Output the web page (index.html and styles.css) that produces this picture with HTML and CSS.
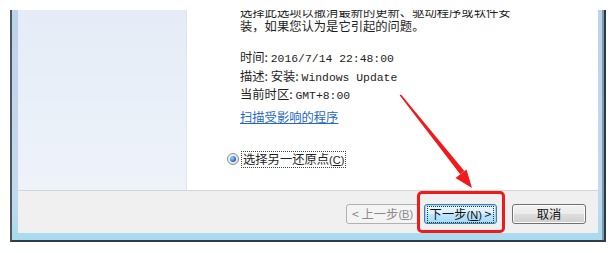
FILE: index.html
```html
<!DOCTYPE html>
<html lang="zh-CN">
<head>
<meta charset="utf-8">
<title>系统还原</title>
<link rel="stylesheet" href="styles.css">
</head>
<body>
<div class="window">
  <div class="client">
    <div class="main">
      <div class="sidebar"></div>
      <div class="content">
        <p class="desc">选择此选项以撤消最新的更新、驱动程序或软件安<br>装，如果您认为是它引起的问题。</p>
        <div class="info">
          <div class="row">时间: <span class="en">2016/7/14 22:48:00</span></div>
          <div class="row">描述: 安装: <span class="en">Windows Update</span></div>
          <div class="row">当前时区: <span class="en">GMT+8:00</span></div>
        </div>
        <a class="link" href="#">扫描受影响的程序</a>
        <div class="radio-row">
          <span class="radio"><span class="dot"></span></span>
          <span class="radio-label">选择另一还原点<span class="en-s">(<u>C</u>)</span></span>
        </div>
      </div>
    </div>
    <div class="footer">
      <button class="btn disabled">&lt; 上一步<span class="en-s">(<u>B</u>)</span></button>
      <button class="btn primary"><span class="focus">下一步<span class="en-s">(<u>N</u>)</span> &gt;</span></button>
      <button class="btn cancel">取消</button>
    </div>
  </div>
</div>
<div class="highlight"></div>
<svg class="arrow" width="614" height="253" viewBox="0 0 614 253">
  <polygon points="399.6,95.3 401,94.4 464.4,171 460.2,174.3" fill="#f2191b"/>
  <polygon points="472,188 455.5,178.1 466.5,169.5" fill="#f2191b"/>
</svg>
</body>
</html>
```

FILE: styles.css
```css
html, body {
  margin: 0;
  padding: 0;
  background: #ffffff;
}
body {
  width: 614px;
  height: 253px;
  overflow: hidden;
  position: relative;
  font-family: "Noto Sans CJK SC", sans-serif;
  font-size: 12.3px;
  color: #1e1e1e;
}
.window {
  margin: 10px 0 0 10px;
  background: linear-gradient(#bcd3ec, #c3d9ef 80%, #a9dbee);
  border-left: 2px solid #4f565c;
  border-right: 2px solid #2c3a46;
  border-bottom: 2px solid #2f3d48;
  padding: 0 6px 7px 6px;
  box-sizing: content-box;
  width: 580px;
  height: 223px;
  box-shadow: inset -2px 0 0 #7d9bb6;
}
.client {
  width: 580px;
  height: 223px;
  display: flex;
  flex-direction: column;
  background: #f0f0f0;
}
.main {
  height: 180px;
  display: flex;
  border-bottom: 1px solid #d5d5d5;
  overflow: hidden;
}
.sidebar {
  width: 168px;
  background: linear-gradient(#e5ecf7, #eef3fa);
  border-right: 1px solid #dde5ef;
}
.content {
  flex: 1;
  background: #ffffff;
  padding-left: 53px;
  overflow: hidden;
}
.desc {
  margin: -4px 0 0 0;
  line-height: 13.5px;
}
.info {
  margin-top: 18px;
}
.row {
  height: 18.5px;
  line-height: 13px;
}
.en {
  font-family: "Liberation Mono", monospace;
  font-size: 11.4px;
}
.en-s {
  font-family: "Liberation Sans", sans-serif;
  font-size: 11px;
}
.link {
  display: inline-block;
  margin-top: 4px;
  color: #1f68c4;
  text-decoration: underline;
  line-height: 13px;
}
.radio-row {
  display: flex;
  align-items: center;
  margin-left: -13px;
  margin-top: 26px;
}
.radio {
  width: 10px;
  height: 10px;
  border: 1px solid #8a9097;
  border-radius: 50%;
  background: radial-gradient(circle at 40% 40%, #ffffff, #d6d9dd);
  display: flex;
  align-items: center;
  justify-content: center;
  margin-right: 3px;
}
.dot {
  width: 6px;
  height: 6px;
  border-radius: 50%;
  background: radial-gradient(circle at 35% 35%, #a8d6ff, #1f5fb0 70%);
}
.radio-label {
  outline: 1px dotted #444;
  padding: 0 1px;
  line-height: 14px;
}
.footer {
  flex: 1;
  display: flex;
  align-items: flex-start;
  justify-content: flex-end;
  padding: 13px 12px 0 0;
  background: #f0f0f0;
}
.btn {
  height: 20px;
  padding: 0;
  font-family: "Noto Sans CJK SC", sans-serif;
  font-size: 12.3px;
  line-height: 16px;
  border-radius: 3px;
  display: flex;
  align-items: center;
  justify-content: center;
}
.disabled {
  width: 73px;
  border: 1px solid #adb2b5;
  background: #f4f4f4;
  color: #8a8a8a;
}
.primary {
  width: 73px;
  margin-left: 5px;
  border: 1px solid #3c7fb1;
  background: linear-gradient(#eaf6fd, #d9f0fc 50%, #bee6fd 51%, #a7d9f5);
  box-shadow: inset 0 0 0 1px #9fd6f5;
  color: #111;
}
.focus {
  outline: 1px dotted #333;
  outline-offset: 0;
  padding: 0 2px;
  line-height: 14px;
}
.cancel {
  width: 74px;
  margin-left: 15px;
  border: 1px solid #707070;
  background: linear-gradient(#f2f2f2, #ebebeb 50%, #dddddd 51%, #cfcfcf);
  box-shadow: inset 0 0 0 1px #fbfbfb;
  color: #111;
}
.highlight {
  position: absolute;
  left: 417px;
  top: 191px;
  width: 82px;
  height: 36px;
  border: 3px solid #f0191b;
  border-radius: 5px;
}
.arrow {
  position: absolute;
  left: 0;
  top: 0;
}
```
